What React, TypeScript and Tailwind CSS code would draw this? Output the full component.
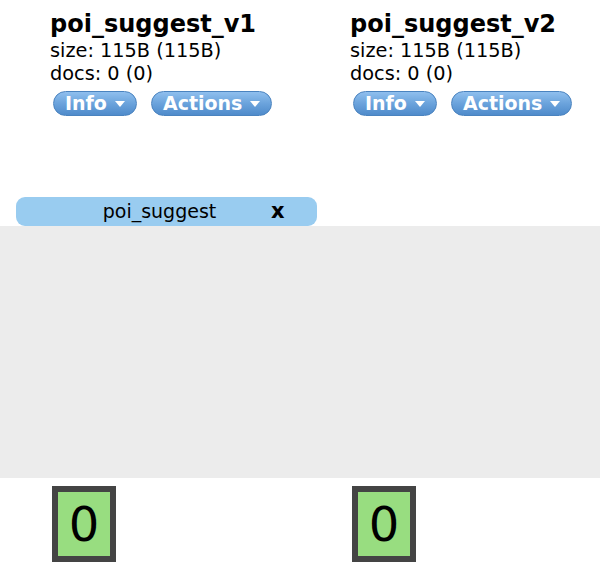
import React from 'react';

const font = { fontFamily: '"DejaVu Sans", Verdana, sans-serif' };

export default function App() {
  return (
    <div className="w-[600px] h-[588px] bg-white text-black overflow-hidden" style={font}>
      {/* Index headers */}
      <div className="flex h-[197px]">
        <IndexHeader name="poi_suggest_v1" />
        <IndexHeader name="poi_suggest_v2" />
      </div>

      {/* Alias tab */}
      <div className="pl-[16px]">
        <div className="w-[301px] h-[29px] rounded-[9px] bg-[#99ccf0] flex items-center text-[19px]">
          <span className="flex-1 text-center pl-[32px]">poi_suggest</span>
          <span className="w-[46px] font-bold text-[21px]">x</span>
        </div>
      </div>

      {/* Alias area */}
      <div className="h-[252px] bg-[#ececec]" />

      {/* Shard boxes */}
      <div className="flex pt-[8px]">
        <ShardCell />
        <ShardCell />
      </div>
    </div>
  );
}

function IndexHeader({ name }: { name: string }) {
  return (
    <div className="w-[300px] pl-[50px] pt-[10px]">
      <div className="text-[24px] font-bold leading-[29px]">{name}</div>
      <div className="text-[19.3px] leading-[23px]">size: 115B (115B)</div>
      <div className="text-[19.3px] leading-[23px]">docs: 0 (0)</div>
      <div className="flex gap-[14px] pl-[3px] pt-[6px]">
        <DropButton label="Info" />
        <DropButton label="Actions" />
      </div>
    </div>
  );
}

function DropButton({ label }: { label: string }) {
  return (
    <div className="h-[25px] px-[11px] rounded-full border border-[#4a83bf] bg-gradient-to-b from-[#8fbfee] via-[#6ba3dc] to-[#4f8bcb] text-white font-bold text-[19px] flex items-center gap-[8px] leading-none">
      <span>{label}</span>
      <svg width="10" height="6" viewBox="0 0 10 6">
        <path d="M0 0 L10 0 L5 6 Z" fill="white" />
      </svg>
    </div>
  );
}

function ShardCell() {
  return (
    <div className="w-[300px] pl-[52px]">
      <div className="w-[64px] h-[76px] border-[6px] border-[#444444] bg-[#98dd80] flex items-center justify-center text-[48px] leading-none">
        0
      </div>
    </div>
  );
}
